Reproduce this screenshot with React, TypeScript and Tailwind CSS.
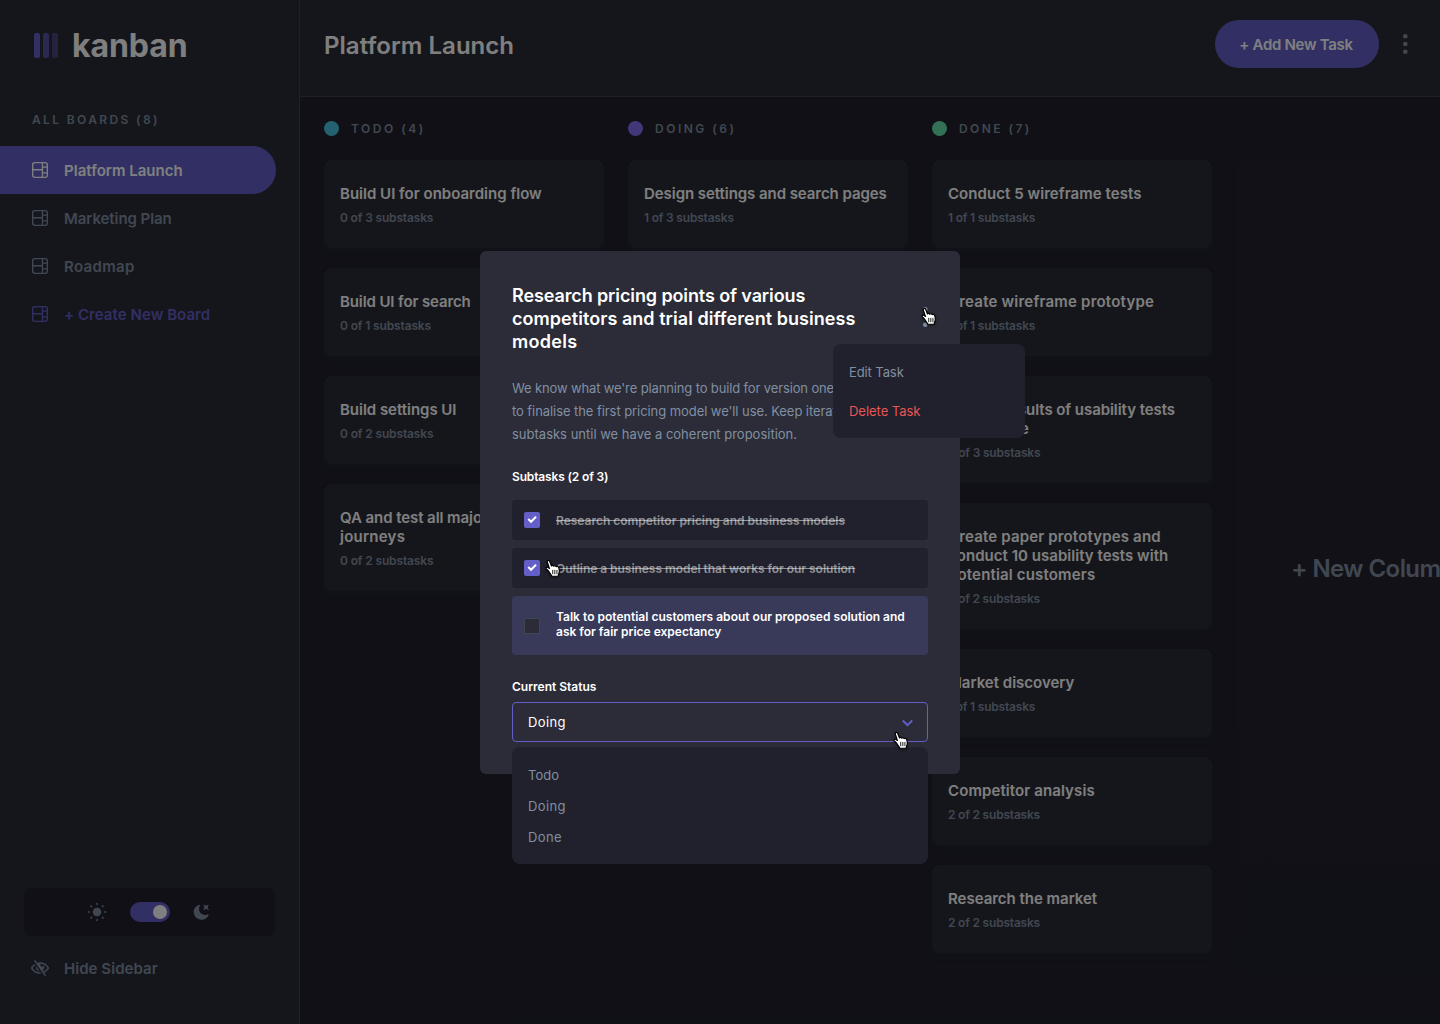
import React from 'react';

type Line = { text: string; tracking: string };
type Card = { lines: Line[]; sub: string; subTracking: string };
type Column = { name: string; tracking: string; dot: string; cards: Card[] };

const columns: Column[] = [
  {
    name: 'TODO (4)',
    tracking: 'tracking-[2.5px]',
    dot: 'bg-[#49c4e5]',
    cards: [
      { lines: [{ text: 'Build UI for onboarding flow', tracking: 'tracking-[0.01px]' }], sub: '0 of 3 substasks', subTracking: 'tracking-[-0.16px]' },
      { lines: [{ text: 'Build UI for search', tracking: 'tracking-[-0.11px]' }], sub: '0 of 1 substasks', subTracking: 'tracking-[-0.14px]' },
      { lines: [{ text: 'Build settings UI', tracking: 'tracking-[-0.03px]' }], sub: '0 of 2 substasks', subTracking: 'tracking-[-0.14px]' },
      {
        lines: [
          { text: 'QA and test all major user', tracking: 'tracking-[-0.07px]' },
          { text: 'journeys', tracking: 'tracking-[0.25px]' },
        ],
        sub: '0 of 2 substasks',
        subTracking: 'tracking-[-0.14px]',
      },
    ],
  },
  {
    name: 'DOING (6)',
    tracking: 'tracking-[2.5px]',
    dot: 'bg-[#8471f2]',
    cards: [
      { lines: [{ text: 'Design settings and search pages', tracking: 'tracking-[-0.06px]' }], sub: '1 of 3 substasks', subTracking: 'tracking-[-0.2px]' },
    ],
  },
  {
    name: 'DONE (7)',
    tracking: 'tracking-[2.45px]',
    dot: 'bg-[#67e2ae]',
    cards: [
      { lines: [{ text: 'Conduct 5 wireframe tests', tracking: 'tracking-[0.06px]' }], sub: '1 of 1 substasks', subTracking: 'tracking-[-0.2px]' },
      { lines: [{ text: 'Create wireframe prototype', tracking: 'tracking-[0.21px]' }], sub: '1 of 1 substasks', subTracking: 'tracking-[-0.2px]' },
      {
        lines: [
          { text: 'Review results of usability tests', tracking: 'tracking-[-0.06px]' },
          { text: 'and iterate', tracking: 'tracking-[0.35px]' },
        ],
        sub: '3 of 3 substasks',
        subTracking: 'tracking-[-0.2px]',
      },
      {
        lines: [
          { text: 'Create paper prototypes and', tracking: 'tracking-[0.16px]' },
          { text: 'conduct 10 usability tests with', tracking: 'tracking-[0.03px]' },
          { text: 'potential customers', tracking: 'tracking-[0.16px]' },
        ],
        sub: '2 of 2 substasks',
        subTracking: 'tracking-[-0.2px]',
      },
      { lines: [{ text: 'Market discovery', tracking: 'tracking-[0px]' }], sub: '1 of 1 substasks', subTracking: 'tracking-[-0.2px]' },
      { lines: [{ text: 'Competitor analysis', tracking: 'tracking-[0.1px]' }], sub: '2 of 2 substasks', subTracking: 'tracking-[-0.2px]' },
      { lines: [{ text: 'Research the market', tracking: 'tracking-[-0.02px]' }], sub: '2 of 2 substasks', subTracking: 'tracking-[-0.2px]' },
    ],
  },
];

function BoardIcon() {
  return (
    <svg width="16" height="16" viewBox="0 0 16 16" fill="currentColor" className="shrink-0">
      <path d="M0 2.889A2.889 2.889 0 0 1 2.889 0H13.11A2.889 2.889 0 0 1 16 2.889V13.11A2.888 2.888 0 0 1 13.111 16H2.89A2.889 2.889 0 0 1 0 13.111V2.89Zm1.333 5.555v4.667c0 .859.697 1.556 1.556 1.556h6.889V8.444H1.333Zm8.445-1.333V1.333h-6.89A1.556 1.556 0 0 0 1.334 2.89V7.11h8.445Zm1.333-1.333v4.444h3.556V5.778H11.11Zm3.556 5.778H11.11v3.11h2a1.556 1.556 0 0 0 1.556-1.555v-1.555Zm0-7.112V2.89a1.555 1.555 0 0 0-1.556-1.556h-2v3.111h3.556Z" />
    </svg>
  );
}

function SunIcon() {
  const angles = [0, 45, 90, 135, 180, 225, 270, 315];
  return (
    <svg width="20" height="20" viewBox="-10 -10 20 20" className="text-[#828fa3]">
      <circle r="4.3" fill="currentColor" />
      {angles.map((a) => (
        <line key={a} x1="7.7" y1="0" x2="8.5" y2="0" transform={`rotate(${a})`} stroke="currentColor" strokeWidth="1.6" strokeLinecap="round" />
      ))}
    </svg>
  );
}

function MoonIcon() {
  return (
    <svg width="16" height="16" viewBox="0 0 16 16" fill="#828fa3">
      <path d="M6.474.682c.434-.11.718.406.481.78A6.067 6.067 0 0 0 6.01 4.72c0 3.418 2.827 6.187 6.314 6.187.89.002 1.77-.182 2.584-.54.408-.18.894.165.724.57-1.16 2.775-3.944 4.73-7.194 4.73-4.292 0-7.771-3.41-7.771-7.615 0-3.541 2.466-6.518 5.807-7.37Zm8.433.07c.442-.294.969.232.674.674l-.525.787a1.943 1.943 0 0 0 0 2.157l.525.788c.295.441-.232.968-.674.673l-.787-.525a1.943 1.943 0 0 0-2.157 0l-.786.525c-.442.295-.97-.232-.675-.673l.525-.788a1.943 1.943 0 0 0 0-2.157l-.525-.787c-.295-.442.232-.968.674-.673l.787.525a1.943 1.943 0 0 0 2.157 0l.787-.526Z" />
    </svg>
  );
}

function HideIcon() {
  return (
    <svg width="18" height="16" viewBox="0 0 18 16" fill="currentColor" className="-mx-px shrink-0">
      <path d="M8.522 11.223a4.252 4.252 0 0 1-3.654-5.22l3.654 5.22ZM9 12.25A8.685 8.685 0 0 1 1.5 8a8.612 8.612 0 0 1 2.76-2.864l-.86-1.23A10.112 10.112 0 0 0 .208 7.238a1.5 1.5 0 0 0 0 1.524A10.187 10.187 0 0 0 9 13.75c.414 0 .828-.025 1.239-.074l-1-1.43A8.88 8.88 0 0 1 9 12.25Zm8.792-3.488a10.14 10.14 0 0 1-4.486 4.046l1.504 2.148a.375.375 0 0 1-.092.523l-.648.453a.375.375 0 0 1-.523-.092L3.19 1.044A.375.375 0 0 1 3.282.52L3.93.068a.375.375 0 0 1 .523.092l1.735 2.479A10.308 10.308 0 0 1 9 2.25c3.746 0 7.031 2 8.792 4.988a1.5 1.5 0 0 1 0 1.524ZM16.5 8a8.674 8.674 0 0 0-6.755-4.219A1.75 1.75 0 1 0 12.75 5v-.001a4.25 4.25 0 0 1-1.154 5.366l.834 1.192A8.641 8.641 0 0 0 16.5 8Z" />
    </svg>
  );
}

function Dots({ className }: { className: string }) {
  return (
    <svg width="5" height="20" viewBox="0 0 5 20" fill="#828fa3" className={className}>
      <circle cx="2.308" cy="2.308" r="2.308" />
      <circle cx="2.308" cy="10" r="2.308" />
      <circle cx="2.308" cy="17.692" r="2.308" />
    </svg>
  );
}

function Pointer({ className }: { className: string }) {
  return (
    <svg width="19" height="21" viewBox="0 0 17 19" className={`absolute ${className} drop-shadow-[0_1px_1px_rgba(0,0,0,0.45)]`}>
      <path
        d="M4.9 12.2C4.2 10.9 2.9 9.8 2.2 9.1 1.2 8 2.4 6.9 3.6 7.6L4.8 8.5 3 3C2.4 1.3 4.4.6 5.1 2.2L6.7 6.3C7 5.6 8.4 5.6 8.8 6.5 9.3 5.9 10.6 6 11 6.9 11.6 6.4 12.9 6.7 13.2 7.8 13.7 9.4 14 10.8 13.6 12.3 13.3 13.4 12.8 14 12.7 15.6H6.9C6.6 14.3 5.6 13.4 4.9 12.2Z"
        fill="#fff"
        stroke="#000"
        strokeWidth="1.1"
        strokeLinejoin="round"
      />
      <path d="M7.8 10.2v3.2M9.7 10.2v3.2M11.6 10.2v3.2" stroke="#000" strokeWidth=".8" strokeLinecap="round" />
    </svg>
  );
}

function NavItem({ label, tone, tracking }: { label: string; tone: string; tracking: string }) {
  return (
    <div className={`flex h-12 w-[276px] items-center gap-4 rounded-r-full pl-8 text-[15px] font-semibold ${tone}`}>
      <BoardIcon />
      <span className={`pt-[2px] ${tracking}`}>{label}</span>
    </div>
  );
}

function Sidebar() {
  return (
    <aside className="flex w-[300px] shrink-0 flex-col border-r border-[#3e3f4e] bg-[#2b2c37]">
      <div className="flex h-[90px] items-center gap-[14px] pl-[34px] pt-[1px]">
        <div className="flex gap-[3px]">
          <div className="h-[25px] w-[6px] rounded-[2px] bg-[#635fc7]" />
          <div className="h-[25px] w-[6px] rounded-[2px] bg-[#635fc7]/75" />
          <div className="h-[25px] w-[6px] rounded-[2px] bg-[#635fc7]/50" />
        </div>
        <div className="text-[32px] font-bold leading-10 tracking-[-0.1px] text-white">kanban</div>
      </div>
      <div className="mt-[22px] pl-8 text-xs font-semibold leading-[15px] tracking-[2.37px] text-[#828fa3]">ALL BOARDS (8)</div>
      <nav className="mt-[19px]">
        <NavItem label="Platform Launch" tone="bg-[#635fc7] text-white" tracking="tracking-[0.02px]" />
        <NavItem label="Marketing Plan" tone="text-[#828fa3]" tracking="tracking-[-0.07px]" />
        <NavItem label="Roadmap" tone="text-[#828fa3]" tracking="tracking-[0.35px]" />
        <NavItem label="+ Create New Board" tone="text-[#635fc7]" tracking="tracking-[0.06px]" />
      </nav>
      <div className="mx-6 mt-auto flex h-12 items-center justify-center gap-[23px] rounded-md bg-[#20212c] pr-1">
        <SunIcon />
        <div className="flex h-5 w-10 items-center justify-end rounded-full bg-[#635fc7] px-[3px]">
          <div className="size-[14px] rounded-full bg-white" />
        </div>
        <MoonIcon />
      </div>
      <div className="mb-10 flex h-12 items-center gap-4 pl-8 pt-4 text-[15px] font-semibold text-[#828fa3]">
        <HideIcon />
        <span className="pt-[2px] tracking-[0.05px]">Hide Sidebar</span>
      </div>
    </aside>
  );
}

function Header() {
  return (
    <header className="flex h-[97px] shrink-0 items-center border-b border-[#3e3f4e] bg-[#2b2c37] pb-2 pl-6">
      <h1 className="pt-[3px] text-2xl font-semibold leading-[30px] tracking-[0.04px] text-white">Platform Launch</h1>
      <button className="ml-auto h-12 w-[164px] rounded-full bg-[#635fc7] pr-[2px] pt-[2px] text-[15px] font-semibold tracking-[-0.3px] text-white">+ Add New Task</button>
      <Dots className="ml-6 mr-8" />
    </header>
  );
}

function Board() {
  return (
    <main className="flex min-h-0 flex-1 gap-6 overflow-hidden bg-[#20212c] pl-6 pt-6">
      {columns.map((col) => (
        <section key={col.name} className="w-[280px] shrink-0">
          <div className="flex h-[15px] items-center gap-3">
            <div className={`size-[15px] rounded-full ${col.dot}`} />
            <span className={`text-xs font-semibold text-[#828fa3] ${col.tracking}`}>{col.name}</span>
          </div>
          <div className="mt-6 flex flex-col gap-5">
            {col.cards.map((card) => (
              <article key={card.lines[0].text} className="rounded-lg bg-[#2b2c37] px-4 pb-[23px] pt-6 shadow-[0px_4px_6px_rgba(54,78,126,0.1)]">
                <h3 className="text-[15px] font-semibold leading-[19px] text-white">
                  {card.lines.map((l) => (
                    <span key={l.text} className={`block whitespace-nowrap ${l.tracking}`}>{l.text}</span>
                  ))}
                </h3>
                <p className={`mt-[7px] text-xs font-semibold leading-[15px] text-[#828fa3] ${card.subTracking}`}>{card.sub}</p>
              </article>
            ))}
          </div>
        </section>
      ))}
      <div className="mt-[39px] flex h-[814px] w-[280px] shrink-0 items-center justify-center rounded-md bg-linear-to-b from-[#2b2c37]/25 to-[#2b2c37]/12 pr-[6px] pt-[3px] text-2xl font-semibold tracking-[-0.55px] text-[#828fa3]">
        <span className="whitespace-nowrap">+ New Column</span>
      </div>
    </main>
  );
}

function Subtask({ lines, done }: { lines: Line[]; done: boolean }) {
  return (
    <div className={`flex items-center gap-4 rounded px-3 text-xs font-semibold leading-[15px] ${done ? 'h-10 bg-[#20212c] text-white/50 line-through' : 'h-[59px] bg-[#393959] text-white'}`}>
      <div className={`flex size-4 shrink-0 items-center justify-center rounded-[2px] ${done ? 'bg-[#635fc7]' : 'mt-px border border-[#828fa3]/25 bg-[#2b2c37]'}`}>
        {done && (
          <svg width="10" height="8" viewBox="0 0 10 8" fill="none">
            <path d="m1.276 3.066 2.756 2.756 5-5" stroke="#fff" strokeWidth="2" />
          </svg>
        )}
      </div>
      <div className={done ? 'pt-[2px]' : '-mt-[3px]'}>
        {lines.map((l) => (
          <span key={l.text} className={`block whitespace-nowrap ${l.tracking}`}>{l.text}</span>
        ))}
      </div>
    </div>
  );
}

function TaskModal() {
  return (
    <div className="relative h-[523px] w-[480px] rounded-md bg-[#2b2c37] px-8 pt-[33px]">
      <div className="flex items-center justify-between">
        <h2 className="text-lg font-semibold leading-[23px] text-white">
          <span className="block whitespace-nowrap tracking-[-0.11px]">Research pricing points of various</span>
          <span className="block whitespace-nowrap tracking-[0.05px]">competitors and trial different business</span>
          <span className="block whitespace-nowrap tracking-[0.3px]">models</span>
        </h2>
        <Dots className="-mt-[2px]" />
      </div>
      <p className="mt-6 text-[13px] leading-[23px] text-[#828fa3]">
        <span className="block whitespace-nowrap tracking-[-0.135px]">We know what we're planning to build for version one.</span>
        <span className="block whitespace-nowrap tracking-[-0.07px]">to finalise the first pricing model we'll use. Keep iterating</span>
        <span className="block whitespace-nowrap">subtasks until we have a coherent proposition.</span>
      </p>
      <h4 className="mt-[23px] text-xs font-semibold leading-[15px] tracking-[-0.15px] text-white">Subtasks (2 of 3)</h4>
      <div className="mt-4 flex flex-col gap-2">
        <Subtask done lines={[{ text: 'Research competitor pricing and business models', tracking: 'tracking-[-0.01px]' }]} />
        <Subtask done lines={[{ text: 'Outline a business model that works for our solution', tracking: 'tracking-[-0.04px]' }]} />
        <Subtask
          done={false}
          lines={[
            { text: 'Talk to potential customers about our proposed solution and', tracking: 'tracking-[0.015px]' },
            { text: 'ask for fair price expectancy', tracking: 'tracking-[0px]' },
          ]}
        />
      </div>
      <h4 className="mt-6 text-xs font-semibold leading-[15px] text-white">Current Status</h4>
      <div className="mt-2 flex h-10 items-center justify-between rounded border border-[#635fc7] pl-[15px] pr-[14px] pt-[2px] text-[13px] leading-[23px] text-white">
        <span className="tracking-[0.4px]">Doing</span>
        <svg width="11" height="8" viewBox="0 0 11 8" fill="none">
          <path d="m.8 1.5 4.7 4.7 4.7-4.7" stroke="#635fc7" strokeWidth="2" />
        </svg>
      </div>
      <div className="absolute left-8 top-[496px] flex h-[117px] w-[416px] flex-col gap-2 rounded-lg bg-[#20212c] px-4 pt-[17px] text-[13px] leading-[23px] text-[#828fa3]">
        <span>Todo</span>
        <span className="tracking-[0.4px]">Doing</span>
        <span className="tracking-[0.4px]">Done</span>
      </div>
      <div className="absolute left-[353px] top-[93px] flex h-[94px] w-48 flex-col gap-4 rounded-lg bg-[#20212c] px-4 pt-[17px] text-[13px] leading-[23px] text-[#828fa3]">
        <span className="tracking-[-0.1px]">Edit Task</span>
        <span className="tracking-[-0.03px] text-[#ea5555]">Delete Task</span>
      </div>
      <Pointer className="left-[440px] top-[56px]" />
      <Pointer className="left-[64px] top-[308px]" />
      <Pointer className="left-[412px] top-[480px]" />
    </div>
  );
}

export default function App() {
  return (
    <div className='relative flex h-[1024px] w-[1440px] overflow-hidden font-["Inter",sans-serif] antialiased'>
      <Sidebar />
      <div className="flex min-w-0 flex-1 flex-col">
        <Header />
        <Board />
      </div>
      <div className="absolute inset-0 flex items-center justify-center bg-black/50">
        <TaskModal />
      </div>
    </div>
  );
}
